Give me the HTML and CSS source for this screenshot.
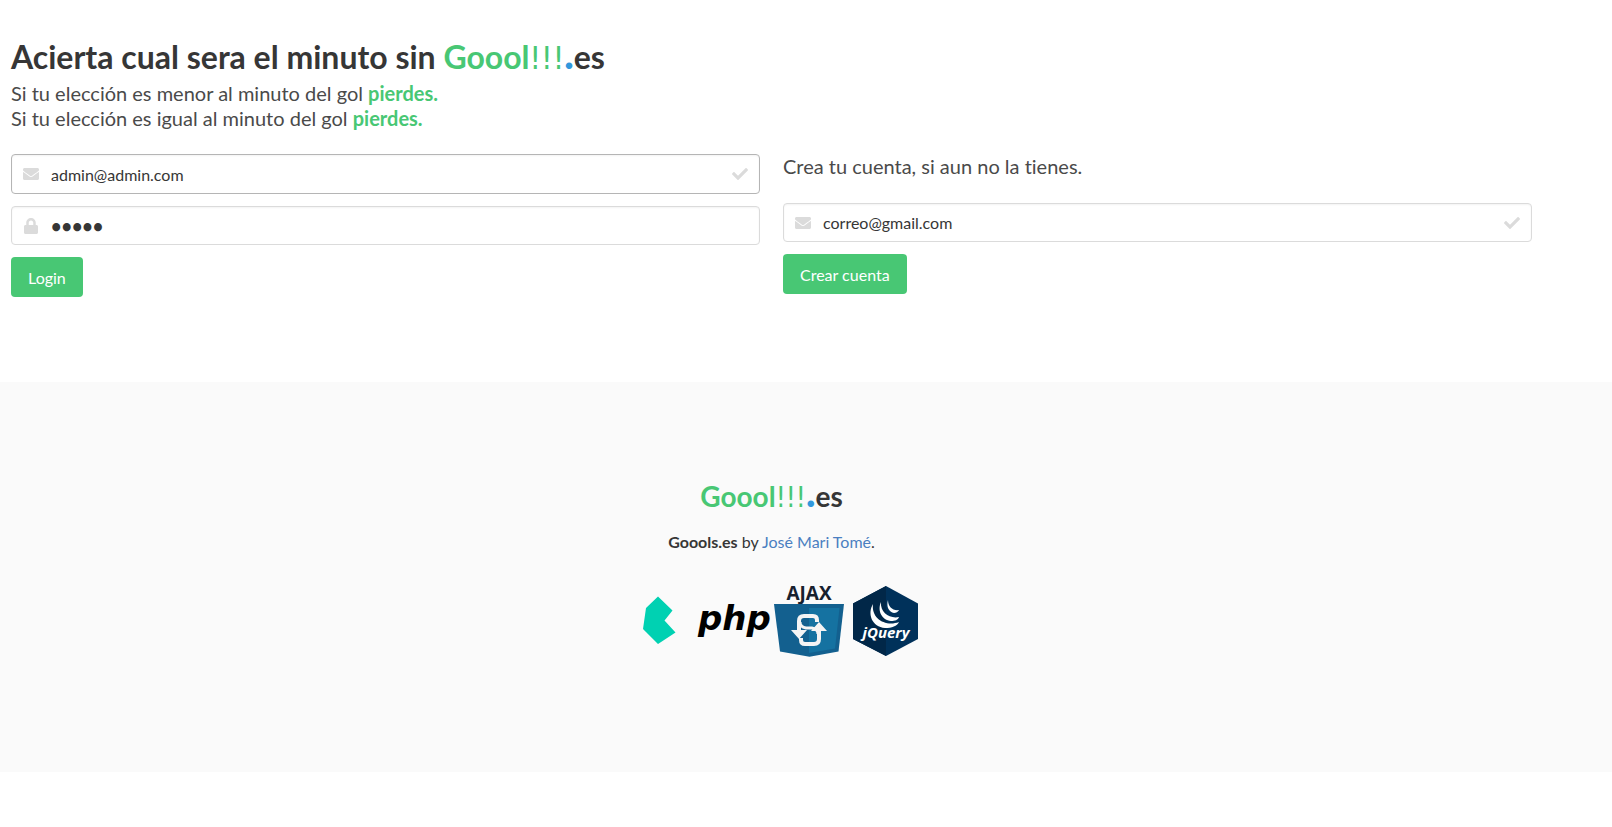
FILE: index.html
```html
<!DOCTYPE html>
<html lang="es">
<head>
    <meta charset="UTF-8">
    <meta name="viewport" content="width=device-width, initial-scale=1.0">
    <title>Goools.es</title>
    <link rel="stylesheet" href="styles.css">
</head>
<body>
    <!-- Iconos compartidos -->
    <svg class="sprite" aria-hidden="true">
        <symbol id="icon-envelope" viewBox="0 0 512 512">
            <path d="M502 191c4-3 10 0 10 5v204c0 27-22 48-48 48H48c-26 0-48-21-48-48V196c0-5 6-8 10-5 22 17 52 40 155 114 21 16 57 48 91 48 34 0 71-33 91-48 103-74 133-97 155-114zM256 320c23 0 57-29 74-42 133-96 143-105 173-129 6-4 9-11 9-18v-19c0-26-22-48-48-48H48C22 64 0 86 0 112v19c0 7 3 14 9 18 30 24 40 33 173 129 17 13 51 42 74 42z"/>
        </symbol>
        <symbol id="icon-lock" viewBox="0 0 448 512">
            <path d="M400 224h-24v-72C376 68 308 0 224 0S72 68 72 152v72H48c-26 0-48 22-48 48v192c0 26 22 48 48 48h352c26 0 48-22 48-48V272c0-26-22-48-48-48zm-104 0H152v-72c0-40 32-72 72-72s72 32 72 72v72z"/>
        </symbol>
        <symbol id="icon-check" viewBox="0 0 512 512">
            <path d="M174 439 7 273c-9-10-9-26 0-36l37-36c10-10 26-10 36 0l112 111L432 72c10-9 26-9 36 0l37 37c9 10 9 26 0 36L210 439c-10 10-26 10-36 0z"/>
        </symbol>
    </svg>

    <main class="container">
        <header class="intro">
            <h1 class="title">Acierta cual sera el minuto sin <span class="verde">Goool<span class="excl">!!!</span></span><span class="azul">.</span>es</h1>
            <p class="subtitle">Si tu elección es menor al minuto del gol <strong class="verde">pierdes.</strong><br>
                Si tu elección es igual al minuto del gol <strong class="verde">pierdes.</strong></p>
        </header>

        <div class="columns">
            <form class="column">
                <div class="control">
                    <input class="input active" type="email" value="admin@admin.com" aria-label="Email">
                    <svg class="icon is-left"><use href="#icon-envelope"/></svg>
                    <svg class="icon is-right"><use href="#icon-check"/></svg>
                </div>
                <div class="control">
                    <input class="input password" type="password" value="admin" aria-label="Contraseña">
                    <svg class="icon is-left"><use href="#icon-lock"/></svg>
                </div>
                <button class="button" type="button">Login</button>
            </form>

            <form class="column">
                <p class="subtitle cuenta">Crea tu cuenta, si aun no la tienes.</p>
                <div class="control">
                    <input class="input" type="email" value="correo@gmail.com" aria-label="Correo">
                    <svg class="icon is-left"><use href="#icon-envelope"/></svg>
                    <svg class="icon is-right"><use href="#icon-check"/></svg>
                </div>
                <button class="button" type="button">Crear cuenta</button>
            </form>
        </div>
    </main>

    <footer class="footer">
        <h2 class="footer-title"><span class="verde">Goool<span class="excl">!!!</span></span><span class="azul">.</span>es</h2>
        <p><strong>Goools.es</strong> by <a href="#">José Mari Tomé</a>.</p>
        <div class="logos">
            <svg viewBox="0 0 72 72" role="img" aria-label="Bulma">
                <path fill="#00d1b2" d="M36 11.500 50.500 25.500 42.500 35.500 53.500 47.500 36 59 21 44 24 23z"/>
            </svg>
            <svg viewBox="0 0 72 72" role="img" aria-label="PHP">
                <text class="php" x="0" y="45">php</text>
            </svg>
            <svg viewBox="0 0 72 72" role="img" aria-label="AJAX">
                <text class="ajax" x="35" y="15">AJAX</text>
                <path fill="#13608f" d="M0 19h70l-5.500 47.500-29 5.200-29.500-5.200z"/>
                <path fill="#1572a1" d="M35 23h30.500l-4.500 40.500-26 4.500z"/>
                <g fill="none" stroke="#f4f4f4" stroke-width="4">
                    <path d="M43 37v-2q0-4-4-4h-9q-5 0-5 5v10"/>
                    <path d="M45 44v10q0 5-5 5h-9q-4 0-4-4v-2"/>
                    <path stroke-width="3" d="M26 37q0 5 6 6h6q6 1 6 6"/>
                </g>
                <path fill="#f4f4f4" d="M17 45h16l-8 9zM37 46h16l-8-9z"/>
            </svg>
            <svg viewBox="0 0 72 72" role="img" aria-label="jQuery">
                <path fill="#00315a" d="M36 1 68 18.500V54L36 71 3 54V18.500z"/>
                <path fill="#012748" d="M36 1v70L3 54V18.500z"/>
                <g fill="#ffffff">
                    <path d="M23 19c-6 10-1 23 12 24 7 0 12-2 14-6-13 5-28-3-26-18z"/>
                    <path d="M31 17c-4 9 1 18 10 19 4 0 7-1 8-4-9 2-19-4-18-15z"/>
                    <path d="M38 15c-2 7 1 12 6 13 2 0 4-1 5-3-6 1-11-3-11-10z"/>
                </g>
                <text class="jquery" x="36" y="53">jQuery</text>
            </svg>
        </div>
    </footer>
</body>
</html>
```
FILE: styles.css
```css
* {
    box-sizing: border-box;
}

body {
    margin: 0;
    background-color: #ffffff;
    color: #363636;
    font-family: Lato, sans-serif;
    font-size: 16px;
    line-height: 24px;
    font-variant-ligatures: none;
}

h1, h2, p {
    margin: 0;
}

.sprite {
    display: none;
}

.container {
    padding: 36px 80px 85px 11px;
}

.title {
    font-size: 32px;
    font-weight: 700;
    line-height: 42px;
}

.subtitle {
    color: #4a4a4a;
    font-size: 20px;
    line-height: 25px;
    margin-top: 3px;
}

.verde {
    color: #48c774;
}

.excl {
    font-family: "DejaVu Sans Condensed", "DejaVu Sans", sans-serif;
    font-weight: 400;
    font-stretch: condensed;
    line-height: 1;
}

.azul {
    color: #3298dc;
    font-size: 40px;
    font-weight: 900;
    line-height: 0;
}

.columns {
    display: grid;
    grid-template-columns: 1fr 1fr;
    gap: 23px;
    margin-top: 23px;
}

.column {
    display: flex;
    flex-direction: column;
    align-items: flex-start;
    gap: 12px;
}

.cuenta {
    margin: 0 0 12px;
}

.control {
    position: relative;
    width: 100%;
}

.input {
    display: block;
    width: 100%;
    height: 39px;
    padding: 0 39px;
    border: 1px solid #dbdbdb;
    border-radius: 4px;
    box-shadow: inset 0 1px 2px rgba(10, 10, 10, 0.05);
    background-color: #ffffff;
    color: #363636;
    font: inherit;
    outline: none;
}

.input.active {
    height: 40px;
}

.input.active,
.input:hover {
    border-color: #b5b5b5;
}

.input.password {
    font-size: 18px;
    font-weight: 700;
}

.icon {
    position: absolute;
    top: 12px;
    width: 16px;
    height: 16px;
    fill: #dbdbdb;
    pointer-events: none;
}

.is-left {
    left: 12px;
}

.is-right {
    right: 12px;
}

.button {
    height: 40px;
    padding: 2px 17px 0;
    border: none;
    border-radius: 4px;
    background-color: #48c774;
    color: #ffffff;
    font: inherit;
    cursor: pointer;
}

.button:hover {
    background-color: #3ec46d;
}

.footer {
    padding: 96px 69px 115px 0;
    background-color: #fafafa;
    text-align: center;
}

.footer-title {
    margin-bottom: 16px;
    font-size: 28px;
    line-height: 36px;
}

.footer a {
    color: #4a7fc1;
    text-decoration: none;
}

.logos {
    display: flex;
    justify-content: center;
    gap: 4px;
    margin-top: 31px;
}

.logos svg {
    width: 72px;
    height: 72px;
    overflow: visible;
}

.php {
    fill: #000000;
    font: italic 700 34px "DejaVu Sans", sans-serif;
}

.ajax {
    fill: #17202e;
    font: 700 19px "Open Sans", sans-serif;
    text-anchor: middle;
}

.jquery {
    fill: #ffffff;
    font: italic 700 15px "Open Sans", sans-serif;
    text-anchor: middle;
}

@media (max-width: 768px) {
    .container {
        padding-right: 11px;
    }

    .columns {
        grid-template-columns: 1fr;
    }

    .footer {
        padding-right: 0;
    }
}
```
